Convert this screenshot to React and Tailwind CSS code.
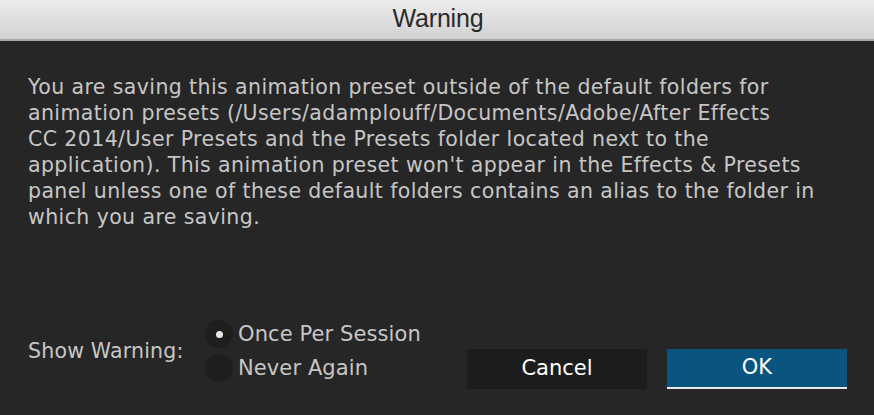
export default function App() {
  return (
    <div className="w-[874px] h-[415px] flex flex-col bg-[#262626] overflow-hidden">
      <div className="h-[41px] flex items-center justify-center bg-gradient-to-b from-[#ececec] to-[#d2d2d2] border-b-2 border-[#a8a8a8]">
        <span className="text-[25px] text-[#2a2a2a] font-['Liberation_Sans',sans-serif] tracking-[-0.2px] pb-[1px] pl-[2px]">Warning</span>
      </div>
      <div className="flex-1 flex flex-col pl-[28px] pr-[27px] font-['DejaVu_Sans',sans-serif] text-[#c6c6c6]">
        <p className="mt-[33px] text-[20.5px] leading-[26px] tracking-[0.4px] whitespace-nowrap">
          You are saving this animation preset outside of the default folders for
          <br />
          animation presets (/Users/adamplouff/Documents/Adobe/After Effects
          <br />
          CC 2014/User Presets and the Presets folder located next to the
          <br />
          application). This animation preset won't appear in the Effects &amp; Presets
          <br />
          panel unless one of these default folders contains an alias to the folder in
          <br />
          which you are saving.
        </p>
        <div className="mt-auto mb-[26px] flex items-end">
          <div className="flex items-center h-[62px] mb-[7px]">
            <span className="text-[20.5px] w-[177px] tracking-[0.2px]">Show Warning:</span>
            <div className="flex flex-col gap-[6px]">
              <label className="flex items-center gap-[5px]">
                <span className="w-[28px] h-[28px] rounded-full bg-[#1e1e1e] flex items-center justify-center">
                  <span className="w-[7px] h-[7px] rounded-full bg-[#e8e8e8]" />
                </span>
                <span className="text-[21px] leading-[28px] tracking-[0.1px]">Once Per Session</span>
              </label>
              <label className="flex items-center gap-[5px]">
                <span className="w-[28px] h-[28px] rounded-full bg-[#1e1e1e]" />
                <span className="text-[21px] leading-[28px] tracking-[0.1px]">Never Again</span>
              </label>
            </div>
          </div>
          <div className="ml-auto flex gap-[20px]">
            <button className="w-[180px] h-[40px] bg-[#1c1c1c] text-white text-[21px]">Cancel</button>
            <button className="w-[180px] h-[40px] bg-[#0a5580] text-white text-[21px] border-b-2 border-[#e8e8e8]">OK</button>
          </div>
        </div>
      </div>
    </div>
  );
}
